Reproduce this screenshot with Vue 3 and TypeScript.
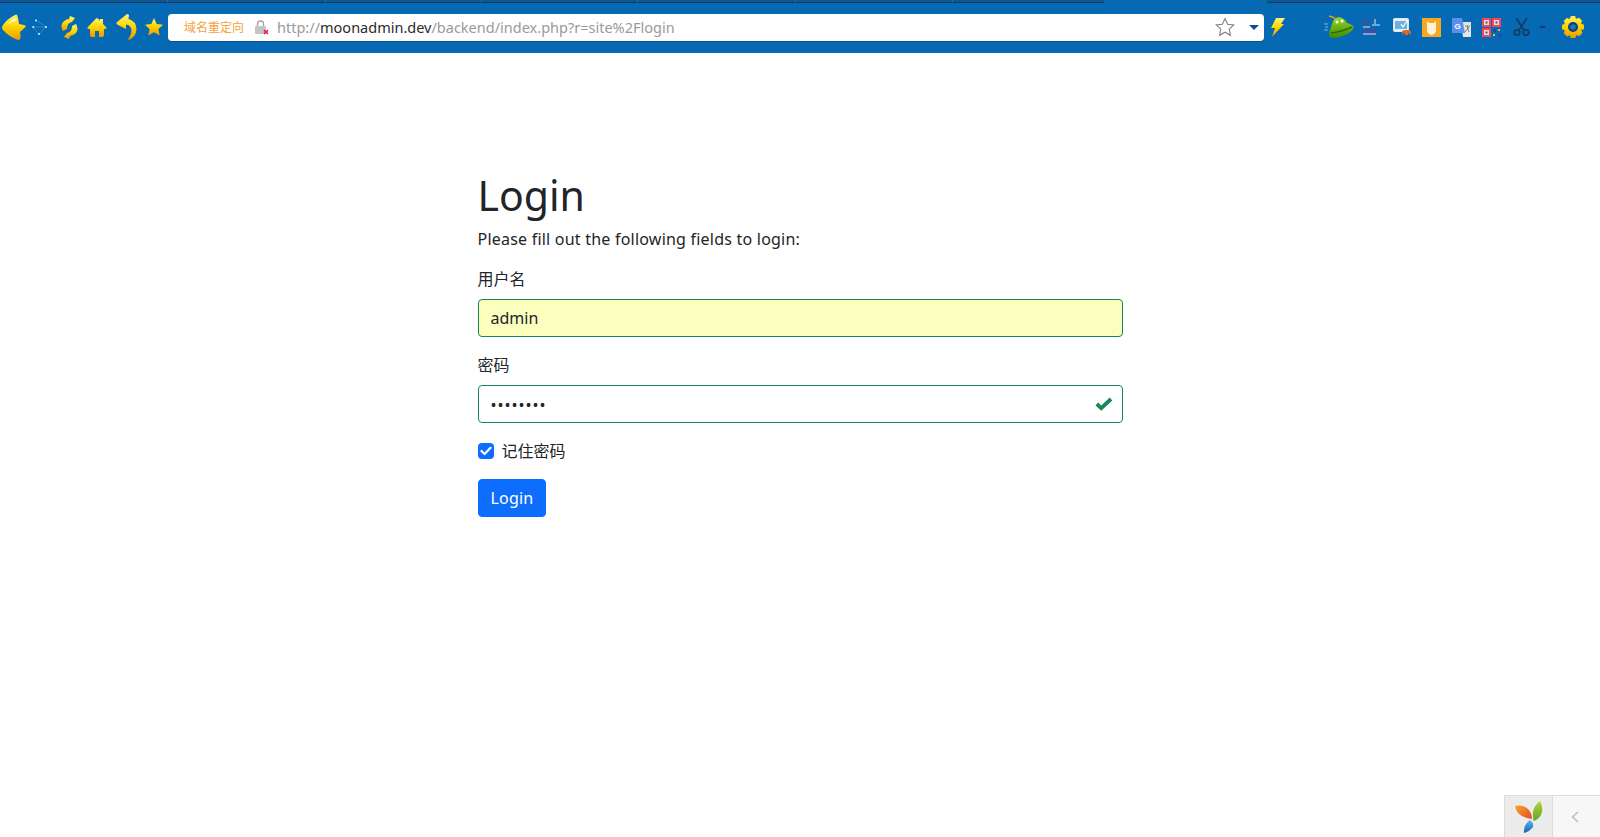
<script setup lang="ts">
const tabs: number[] = [168, 158, 156, 156, 158, 157, 152]
</script>

<template>
  <div class="page">
    <header class="browser">
      <div class="tabstrip">
        <span v-for="(w, i) in tabs" :key="i" class="tab" :style="{ width: w + 'px' }"></span>
        <span class="tab-gap"></span>
        <span class="tab tab-rest"></span>
      </div>
      <div class="toolbar">
        <svg class="i-back" width="26" height="27" viewBox="0 0 26 27">
          <defs>
            <linearGradient id="gold" x1="0" y1="0" x2="0" y2="1">
              <stop offset="0" stop-color="#fff27a" />
              <stop offset="0.45" stop-color="#ffd800" />
              <stop offset="1" stop-color="#e89a00" />
            </linearGradient>
          </defs>
          <path d="M15 1 Q7 5 3 11 Q1 14 3 16 Q9 23 18 26 Q21 26 20.5 22 L20 18 L25.5 13 Q26 11 24 11 L19 10 Q18 3 17 1 Q16 0 15 1 Z" fill="url(#gold)" />
          <path d="M15 4 Q10 7 7 11 Q11 8 16 7 Z" fill="#fffbd0" />
        </svg>
        <svg class="i-dots" width="15" height="16" viewBox="0 0 15 16" fill="none" stroke="#4f9dd4" stroke-width="0.6">
          <path d="M4 1 L14 8 L7 15 L1 8 L14 8" />
          <circle cx="4" cy="1.5" r="1" fill="#d8eefa" stroke="none" />
          <circle cx="1.2" cy="8" r="1" fill="#d8eefa" stroke="none" />
          <circle cx="14" cy="8" r="1" fill="#d8eefa" stroke="none" />
          <circle cx="7" cy="15" r="1" fill="#d8eefa" stroke="none" />
        </svg>
        <svg class="i-reload" width="17" height="23" viewBox="0 0 17 23" fill="url(#gold)">
          <path d="M9 0 L14 2 L11 6 Q6 7 6 13 L2 15 Q-1 10 2 6 Q5 3 8 3 Z" />
          <path d="M8 23 L3 21 L6 17 Q11 16 11 10 L15 8 Q18 13 15 17 Q12 20 9 20 Z" />
        </svg>
        <svg class="i-home" width="20" height="19" viewBox="0 0 20 19" fill="url(#gold)">
          <path d="M9 0.5 Q10 0 11 0.5 L13 2.5 L13 1 L16 1 L16 6 L19.5 9.5 Q20 11 18 11 L17 11 L17 17 Q17 19 15 19 L12 19 L12 13 L8 13 L8 19 L5 19 Q3 19 3 17 L3 11 L2 11 Q0 11 0.5 9.5 Z" />
        </svg>
        <svg class="i-undo" width="21" height="26" viewBox="0 0 21 26" fill="url(#gold)">
          <path d="M11 0 L0.5 8.5 Q0 10 2 11 L10 15 L10 10.5 Q15 11 15.5 16 Q15.5 21 11.5 26 Q20 24 20.5 15 Q20 7 12.5 5 L13 1 Q12 0 11 0 Z" />
        </svg>
        <svg class="i-star" width="18" height="18" viewBox="0 0 18 18">
          <path d="M9 0 L11.7 6 L18 6.7 L13.4 11 L14.7 17.5 L9 14.3 L3.3 17.5 L4.6 11 L0 6.7 L6.3 6 Z" fill="url(#gold)" />
        </svg>

        <div class="address">
          <span class="redirect">域名重定向</span>
          <svg class="lock" width="15" height="15" viewBox="0 0 15 15">
            <path d="M3.5 6 V4 Q3.5 1 6.5 1 Q9.5 1 9.5 4 V6" fill="none" stroke="#a5a5a5" stroke-width="1.4" />
            <rect x="1" y="6" width="11" height="8" rx="1" fill="#c4c4c4" />
            <path d="M10 10 L14 14 M14 10 L10 14" stroke="#e0182d" stroke-width="1.5" />
          </svg>
          <span class="url"><span class="grey">http://</span><span class="host">moonadmin.dev</span><span class="grey">/backend/index.php?r=site%2Flogin</span></span>
          <svg class="fav" width="20" height="20" viewBox="0 0 20 20">
            <path d="M10 1.5 L12.6 7.2 L18.8 7.9 L14.2 12.1 L15.5 18.3 L10 15.2 L4.5 18.3 L5.8 12.1 L1.2 7.9 L7.4 7.2 Z" fill="#fff" stroke="#808080" stroke-width="1.1" />
          </svg>
          <span class="drop"></span>
        </div>

        <svg class="i-bolt" width="14" height="19" viewBox="0 0 14 19" fill="url(#gold)">
          <path d="M5 0 L14 0 L10 6 L13 6 L1 19 L4 10 L0 10 Z" />
        </svg>

        <svg class="i-tank" width="30" height="24" viewBox="0 0 30 24">
          <defs>
            <linearGradient id="tank" x1="0" y1="0" x2="0" y2="1">
              <stop offset="0" stop-color="#9ad81e" />
              <stop offset="1" stop-color="#3f8a06" />
            </linearGradient>
          </defs>
          <path d="M0 9 H4 M1 12 H4 M0 15 H4" stroke="#7fb8e0" stroke-width="1" />
          <path d="M5 1 L11 3" stroke="#e0a030" stroke-width="1.5" />
          <path d="M10 4 Q14 1 18 3 Q22 5 23 8 Q30 10 29.5 13 Q28 18 16 22 Q8 24 6 22 Q4 19 6.5 14 Q8 8 10 4 Z" fill="url(#tank)" />
          <path d="M7 18 Q17 17 28 12" stroke="#2f6b05" stroke-width="1.4" fill="none" />
          <circle cx="13" cy="7" r="1.5" fill="#fff" />
          <circle cx="18" cy="6" r="1.5" fill="#fff" />
        </svg>
        <svg class="i-eq" width="17" height="18" viewBox="0 0 17 18">
          <rect x="0" y="2" width="6" height="5" fill="#3e4f9a" />
          <rect x="0" y="11" width="6" height="6" fill="#3e4f9a" />
          <rect x="7" y="11" width="6" height="6" fill="#3e4f9a" />
          <path d="M0 9 H7 M9 7 H17 M12 1 V6 M0 16 H13" stroke="#dbe8f5" stroke-width="1" />
        </svg>
        <svg class="i-mon" width="18" height="18" viewBox="0 0 18 18">
          <rect x="0.5" y="0.5" width="15" height="13" rx="1" fill="#e8eef2" stroke="#dfe6ea" />
          <rect x="2" y="3" width="12" height="8" fill="#6bb2e2" />
          <path d="M8 6 L10 9 L14 3" stroke="#fff" stroke-width="1.2" fill="none" />
          <rect x="9" y="12" width="9" height="5" rx="2.5" fill="#d96a28" />
          <circle cx="11" cy="16" r="1" fill="#0a68b0" />
          <circle cx="16" cy="16" r="1" fill="#0a68b0" />
        </svg>
        <svg class="i-shield" width="19" height="19" viewBox="0 0 19 19">
          <rect width="19" height="19" fill="#f7a722" />
          <path d="M5 3 L7 5 H12 L14 3 V12 Q14 16 9.5 17 Q5 16 5 12 Z" fill="#fff3dc" />
        </svg>
        <svg class="i-g" width="19" height="19" viewBox="0 0 19 19">
          <path d="M9 4 H19 V19 H11 Z" fill="#e4e4e4" />
          <path d="M1 0 H10 L13 15 H1 Q0 15 0 14 V1 Q0 0 1 0 Z" fill="#5a8fee" />
          <text x="2.5" y="10.5" class="g-letter">G</text>
          <path d="M13 8 H18 M15 8 L17 14 M17 9 L13 14" stroke="#777" stroke-width="0.9" fill="none" />
        </svg>
        <svg class="i-qr" width="19" height="19" viewBox="0 0 19 19">
          <rect width="9" height="9" fill="#f4474f" />
          <rect x="10" width="9" height="9" fill="#f4474f" />
          <rect y="10" width="9" height="9" fill="#f4474f" />
          <rect x="2" y="2" width="5" height="5" fill="#f3d9e0" />
          <rect x="12" y="2" width="5" height="5" fill="#f3d9e0" />
          <rect x="2" y="12" width="5" height="5" fill="#f3d9e0" />
          <rect x="3.5" y="3.5" width="2" height="2" fill="#2a56b8" />
          <rect x="13.5" y="3.5" width="2" height="2" fill="#2a56b8" />
          <rect x="3.5" y="13.5" width="2" height="2" fill="#2a56b8" />
          <rect x="11" y="11" width="3" height="3" fill="#1e4aa8" />
          <rect x="16" y="16" width="3" height="3" fill="#1e4aa8" />
          <rect x="16" y="11" width="2" height="2" fill="#f0c020" />
          <rect x="11" y="16" width="2" height="2" fill="#f0c020" />
        </svg>
        <svg class="i-cut" width="17" height="18" viewBox="0 0 17 18" fill="none" stroke="#123c62" stroke-width="1.8">
          <path d="M3 0 L11 12 M14 0 L6 12" />
          <circle cx="4" cy="14.5" r="2.7" />
          <circle cx="13" cy="14.5" r="2.7" />
        </svg>
        <span class="mini"></span>
        <svg class="i-gear" width="22" height="22" viewBox="0 0 22 22">
          <path d="M9 0 H13 L14 3 L17 1.8 L20 4.8 L18.8 7.6 L22 9 V13 L19 14 L20.2 17 L17.2 20 L14.4 18.8 L13 22 H9 L8 19 L5 20.2 L2 17.2 L3.2 14.4 L0 13 V9 L3 8 L1.8 5 L4.8 2 L7.6 3.2 Z" fill="url(#gold)" stroke="#f0b000" stroke-width="0.5" stroke-linejoin="round" />
          <circle cx="11" cy="11" r="5" fill="#123f78" />
          <circle cx="11" cy="11" r="2.8" fill="#1a76bf" />
        </svg>
      </div>
    </header>

    <main class="content">
      <h1 class="title">Login</h1>
      <p class="lead">Please fill out the following fields to login:</p>
      <form class="form" @submit.prevent>
        <div class="field">
          <label class="label" for="user">用户名</label>
          <input id="user" class="control filled" type="text" value="admin" />
        </div>
        <div class="field">
          <label class="label" for="pass">密码</label>
          <div class="control-wrap">
            <input id="pass" class="control secret" type="password" value="password" />
            <svg class="valid" width="18" height="14" viewBox="0 0 18 14">
              <path d="M1.8 7 L6.3 11.2 L16 2" fill="none" stroke="#198754" stroke-width="3.8" />
            </svg>
          </div>
        </div>
        <label class="remember">
          <span class="box">
            <svg width="12" height="10" viewBox="0 0 12 10">
              <path d="M1.5 5 L4.6 8 L10.5 1.8" fill="none" stroke="#fff" stroke-width="2.2" stroke-linecap="round" stroke-linejoin="round" />
            </svg>
          </span>
          <span class="remember-text">记住密码</span>
        </label>
        <button class="submit" type="submit">Login</button>
      </form>
    </main>

    <aside class="debug">
      <div class="debug-logo">
        <svg width="30" height="32" viewBox="0 0 30 32">
          <defs>
            <linearGradient id="yo" x1="0" y1="0" x2="1" y2="1">
              <stop offset="0" stop-color="#f5a623" />
              <stop offset="1" stop-color="#e84a2c" />
            </linearGradient>
            <linearGradient id="yg" x1="0" y1="0" x2="0" y2="1">
              <stop offset="0" stop-color="#b5d334" />
              <stop offset="1" stop-color="#5ea82c" />
            </linearGradient>
            <linearGradient id="yb" x1="0" y1="0" x2="0" y2="1">
              <stop offset="0" stop-color="#5fb6e8" />
              <stop offset="1" stop-color="#1565b8" />
            </linearGradient>
          </defs>
          <path d="M1 5 Q8 3 14 8 Q18 12 18 18 Q9 17 4 12 Q1 8 1 5 Z" fill="url(#yo)" />
          <path d="M26 0 Q30 8 27 14 Q24 19 19.5 20 Q18 12 20 7 Q22 3 26 0 Z" fill="url(#yg)" />
          <path d="M16 19 Q20 22 19 26 Q15 31 10 32 Q9 24 16 19 Z" fill="url(#yb)" />
        </svg>
      </div>
      <div class="debug-toggle">
        <svg width="8" height="12" viewBox="0 0 8 12" fill="none" stroke="#b8b8b8" stroke-width="1.3">
          <path d="M7 1 L1.5 6 L7 11" />
        </svg>
      </div>
    </aside>
  </div>
</template>

<style scoped>
.page {
  position: relative;
  min-height: 837px;
  overflow: hidden;
  font-family: "Noto Sans", "Noto Sans CJK SC", sans-serif;
  color: #212529;
  background: #fff;
}
.browser {
  height: 53px;
  background: #0669b4;
  box-sizing: border-box;
}
.tabstrip {
  display: flex;
  height: 3px;
  background: #0669b4;
}
.tab {
  box-sizing: border-box;
  background: #13568f;
  border-bottom: 1px solid #0a3f6e;
  border-right: 1px solid #2b6da3;
}
.tab-gap {
  width: 162px;
}
.tab-rest {
  flex: 1;
  border-right: none;
}
.toolbar {
  display: flex;
  align-items: center;
  height: 48px;
  box-sizing: border-box;
}
.toolbar > svg {
  flex: none;
}
.i-dots { margin-left: 6px; }
.i-reload { margin-left: 14px; }
.i-home { margin-left: 9px; }
.i-undo { margin-left: 9px; }
.i-star { margin-left: 8px; }
.address {
  flex: none;
  display: flex;
  align-items: center;
  width: 1096px;
  height: 27px;
  margin-left: 5px;
  padding-left: 16px;
  box-sizing: border-box;
  background: #fff;
  border-radius: 4px;
  box-shadow: 0 1px 1px #0a4f8c;
}
.redirect {
  width: 60px;
  font-size: 12px;
  color: #f5a33c;
  white-space: nowrap;
}
.lock { margin-left: 10px; }
.url {
  margin-left: 8px;
  font-size: 14.5px;
  white-space: nowrap;
}
.grey { color: #9a9a9a; }
.host { color: #2b2b2b; }
.fav { margin-left: auto; }
.drop {
  width: 0;
  height: 0;
  margin: 0 5px 0 14px;
  border-left: 5px solid transparent;
  border-right: 5px solid transparent;
  border-top: 5px solid #0a4f92;
}
.i-bolt { margin-left: 7px; }
.i-tank { margin-left: 39px; }
.i-eq { margin-left: 9px; }
.i-mon { margin-left: 13px; }
.i-shield { margin-left: 11px; }
.i-g { margin-left: 11px; }
.i-qr { margin-left: 11px; }
.i-cut { margin-left: 12px; }
.g-letter {
  font: bold 8px "Liberation Sans", sans-serif;
  fill: #fff;
}
.mini {
  width: 5px;
  height: 2px;
  margin-left: 10px;
  background: #123c62;
}
.i-gear { margin-left: 17px; }

.content {
  width: 645px;
  margin: 0 auto;
  padding-top: 117px;
}
.title {
  margin: 0;
  font-size: 41px;
  font-weight: 400;
  line-height: 50px;
}
.lead {
  margin: 7px 0 0;
  font-size: 16px;
  line-height: 24px;
  letter-spacing: 0.22px;
  white-space: nowrap;
}
.form {
  margin-top: 16px;
}
.field {
  margin-bottom: 16px;
}
.label {
  display: block;
  margin-bottom: 8px;
  font-size: 16px;
  line-height: 24px;
}
.control-wrap {
  position: relative;
}
.control {
  display: block;
  width: 100%;
  height: 38px;
  padding: 6px 12px;
  box-sizing: border-box;
  border: 1px solid #198754;
  border-radius: 4px;
  outline: none;
  font: inherit;
  font-size: 16px;
  line-height: 24px;
  color: #212529;
  background: #fff;
}
.filled {
  background: #faffbd;
}
.secret {
  padding-top: 7px;
  padding-bottom: 5px;
  letter-spacing: 1px;
}
.valid {
  position: absolute;
  right: 10px;
  top: 12px;
}
.remember {
  display: flex;
  align-items: center;
  gap: 8px;
  height: 24px;
  font-size: 16px;
}
.remember-text {
  margin-top: -2px;
}
.box {
  display: flex;
  align-items: center;
  justify-content: center;
  width: 16px;
  height: 16px;
  border-radius: 4px;
  background: #0d6efd;
}
.submit {
  display: block;
  margin-top: 16px;
  height: 38px;
  padding: 0 12px;
  border: 1px solid #0d6efd;
  border-radius: 4px;
  background: #0d6efd;
  color: #fff;
  font: inherit;
  font-size: 16px;
  letter-spacing: 0.2px;
}
.debug {
  position: absolute;
  right: 0;
  bottom: 0;
  display: flex;
  width: 96px;
  height: 42px;
  box-sizing: border-box;
  border-top: 1px solid #dcdcdc;
  border-left: 1px solid #dcdcdc;
  background: #f7f7f7;
}
.debug-logo {
  display: flex;
  align-items: center;
  justify-content: center;
  width: 47px;
  background: #ececec;
  border-right: 1px solid #dcdcdc;
}
.debug-toggle {
  flex: 1;
  display: flex;
  align-items: center;
  justify-content: center;
  padding-right: 4px;
}
</style>
